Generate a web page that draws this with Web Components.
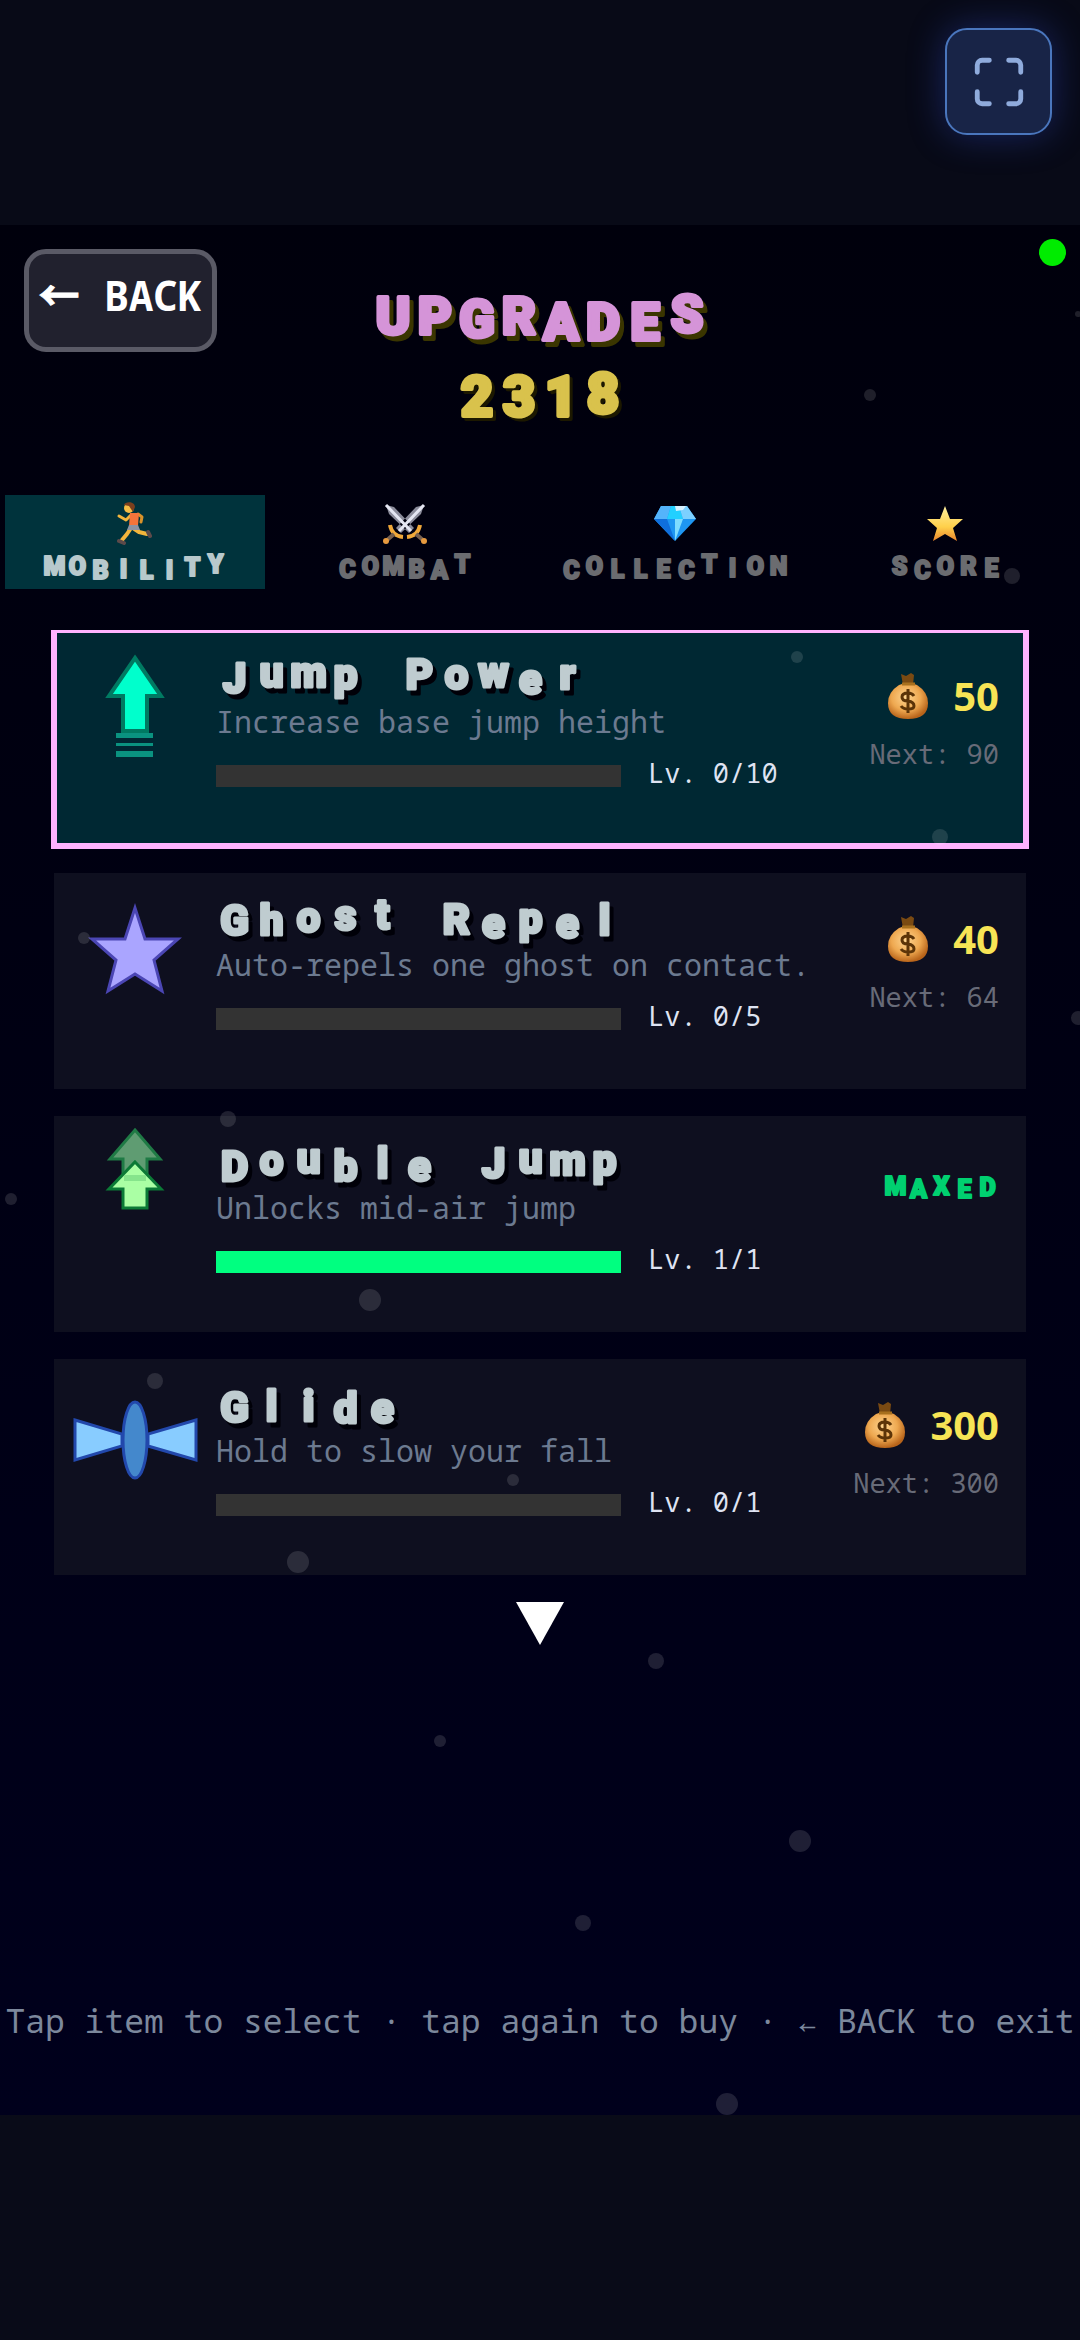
<!DOCTYPE html>
<html lang="en">
<head>
<meta charset="utf-8">
<meta name="viewport" content="width=device-width, initial-scale=1">
<title>Upgrades</title>
<style>
body { margin: 0; background: #080a17; color: #fff; font-family: "Noto Sans Mono", "DejaVu Sans Mono", monospace; }
</style>
</head>
<body>
<game-shell>
  <upgrade-screen>
    <screen-header slot="header" heading="UPGRADES" coins="2318"></screen-header>
    <tab-bar slot="tabs">
      <tab-item label="MOBILITY" bob="0 0 4 3 4 4 1 -2" active>
        <svg viewBox="0 0 38 44" width="38" height="44" aria-hidden="true" fill="none" stroke-linecap="round" stroke-linejoin="round">
          <path d="M22 13L26 16L25 21" stroke="#d9922a" stroke-width="3"/>
          <path d="M15 14L10 19L3 15" stroke="#f2b53c" stroke-width="3"/>
          <path d="M17 27L23 31L31 33M15 27L11 33L6 39" stroke="#f2b53c" stroke-width="4"/>
          <path d="M32 31L34 35M3 40L8 42" stroke="#5c4a4a" stroke-width="4"/>
          <path d="M14 12H23L22 25H13Z" fill="#f4743b"/>
          <path d="M13 24H22L24 29H11Z" fill="#8d93a3"/>
          <circle cx="13" cy="7" r="5" fill="#f5bd45"/>
          <path d="M8 4C9 0 19 0 19 6L17 11L13 5Z" fill="#7b3f1d"/>
        </svg>
      </tab-item>
      <tab-item label="COMBAT" bob="3 0 0 3 4 -2">
        <svg viewBox="0 0 44 42" width="44" height="42" aria-hidden="true">
          <path d="M3 3L11 5L31 26L26 31L6 12ZM41 3L33 5L13 26L18 31L38 12Z" fill="#8b8c9b"/>
          <path d="M3 3L28 29M41 3L16 29" stroke="#e4e6f2" stroke-width="3"/>
          <path d="M7 23Q9 34 20 35M37 23Q35 34 24 35" fill="none" stroke="#f0a83a" stroke-width="4"/>
          <path d="M11 32L3 39M33 32L41 39" stroke="#77604f" stroke-width="4"/>
          <circle cx="3" cy="39" r="3" fill="#e79a3f"/><circle cx="41" cy="39" r="3" fill="#e79a3f"/>
        </svg>
      </tab-item>
      <tab-item label="COLLECTION" bob="4 0 3 3 3 4 -2 2 0 0">
        <svg viewBox="0 0 44 38" width="44" height="38" aria-hidden="true">
          <path d="M8 2H34L43 15L22 37L1 15Z" fill="#1e96f2"/>
          <path d="M8 2H18L14 15H1Z" fill="#54b4fb"/><path d="M18 2H26L30 15H14Z" fill="#22d0ff"/>
          <path d="M26 2H34L43 15H30Z" fill="#7cd0ff"/><path d="M1 15H14L22 37Z" fill="#0f6fdc"/>
          <path d="M22 15H30L22 37Z" fill="#7fdcff"/><path d="M22 2H33L30 6L23 7Z" fill="#d8f2ff"/>
        </svg>
      </tab-item>
      <tab-item label="SCORE" bob="0 4 0 0 2">
        <svg viewBox="0 0 38 37" width="38" height="37" aria-hidden="true">
          <defs><linearGradient id="g" x1="0" y1="0" x2="0" y2="1"><stop offset="0" stop-color="#fff0a0"/><stop offset=".6" stop-color="#ffd04a"/><stop offset="1" stop-color="#e8842c"/></linearGradient></defs>
          <path d="M19 1L24 14H37L27 23L31 36L19 29L7 36L11 23L1 14H14Z" fill="url(#g)"/>
        </svg>
      </tab-item>
    </tab-bar>
    <upgrade-card name="Jump Power" bob="3 -3 -3 -1 0 -1 -1 -3 4 -1" desc="Increase base jump height" level="0" max="10" price="50" next="90" selected>
      <svg slot="icon" viewBox="0 0 162 150" width="162" height="150" aria-hidden="true">
        <path d="M81 28L107 66H93V101H69V66H55Z" fill="#00ffcc" stroke="#007a62" stroke-width="4"/>
        <path d="M62 103H99V108H62ZM62 113H99V116H62ZM62 121H99V127H62Z" fill="#0a9380"/>
      </svg>
    </upgrade-card>
    <upgrade-card name="Ghost Repel" bob="2 2 -1 -3 -4 0 1 5 0 5 2" desc="Auto-repels one ghost on contact." level="0" max="5" price="40" next="64">
      <svg slot="icon" viewBox="0 0 162 150" width="162" height="150" aria-hidden="true">
        <path d="M81 35L91 66H124L100 87L108 118L81 101L54 118L62 87L38 66H71Z" fill="#aaa5ff" stroke="#4b46b4" stroke-width="3"/>
      </svg>
    </upgrade-card>
    <upgrade-card name="Double Jump" bob="5 -1 -3 5 2 5 0 2 -3 -1 -1" desc="Unlocks mid-air jump" level="1" max="1">
      <svg slot="icon" viewBox="0 0 162 150" width="162" height="150" aria-hidden="true">
        <path d="M81 14L106 43H93V65H69V43H56Z" fill="#5f9c72" stroke="#1f7a45" stroke-width="3"/>
        <path d="M81 46L107 73H93V92H69V73H55Z" fill="#aaffa4" stroke="#0b7a36" stroke-width="3"/>
        <path d="M70 59H92V65H70Z" fill="#86e48c"/>
      </svg>
    </upgrade-card>
    <upgrade-card name="Glide" bob="3 2 2 4 4" desc="Hold to slow your fall" level="0" max="1" price="300" next="300">
      <svg slot="icon" viewBox="0 0 162 150" width="162" height="150" aria-hidden="true">
        <g fill="#88ccff" stroke="#2248ac" stroke-width="3">
          <path d="M21 61L68 75V87L21 101Z"/>
          <path d="M142 61L94 75V87L142 101Z"/>
          <ellipse cx="81" cy="81" rx="12" ry="38" fill="#4488cc"/>
        </g>
      </svg>
    </upgrade-card>
    <span slot="hint">Tap item to select · tap again to buy · ← BACK to exit</span>
  </upgrade-screen>
</game-shell>

<script>
const define = (tag, render, css) => customElements.define(tag, class extends HTMLElement {
  connectedCallback() {
    if (this.shadowRoot) return;
    this.attachShadow({ mode: 'open' }).innerHTML = `<style>${css}</style>${render(this)}`;
  }
});
const attr = (el, n) => el.getAttribute(n);

/* Arcade lettering: every glyph is centred in its own cell and bobs up or down. */
define('bob-text', el => {
  const text = attr(el, 'text'), cell = +attr(el, 'cell'), size = +attr(el, 'size');
  const bob = (attr(el, 'bob') || '').split(' ').map(Number);
  const xs = [...text].map((_, i) => (i + 0.5) * cell).join(' ');
  const ys = [...text].map((_, i) => size - 2 + (bob[i] || 0)).join(' ');
  return `<svg width="${text.length * cell}" height="${size + 12}"><text x="${xs}" y="${ys}" font-size="${size}">${text}</text></svg>`;
}, `
:host { display: block; }
svg { display: block; overflow: visible; filter: var(--bob-shadow, none); }
text { font-family: Roboto, sans-serif; font-weight: 900; text-anchor: middle; fill: currentColor;
  stroke: currentColor; stroke-width: var(--bob-weight, 2px); stroke-linejoin: round; }
`);

define('game-shell', () => `
<header><button aria-label="Fullscreen">
  <svg viewBox="0 0 24 24" width="58" height="58" fill="none" stroke="currentColor" stroke-width="2" stroke-linecap="round" stroke-linejoin="round">
    <path d="M8 3H5a2 2 0 0 0-2 2v3M16 3h3a2 2 0 0 1 2 2v3M8 21H5a2 2 0 0 1-2-2v-3M16 21h3a2 2 0 0 0 2-2v-3"/>
  </svg></button></header>
<slot></slot>
<footer></footer>`, `
:host { display: flex; flex-direction: column; min-height: 100vh; }
header, footer { flex: 0 0 225px; box-sizing: border-box; }
header { display: flex; justify-content: flex-end; align-items: flex-start; padding: 28px; }
footer { background: #090b18; }
button { width: 107px; height: 107px; padding: 0; display: grid; place-items: center; color: #8fabdc;
  background: #182447; border: 2px solid #4a76bd; border-radius: 22px; box-shadow: 0 0 36px rgba(50, 80, 210, .4); }
`);

define('star-field', () => `<svg aria-hidden="true">${[
  [870,170,6],[1078,89,3],[1012,351,8],[797,432,6],[940,612,8],[84,713,6],[1078,793,7],[228,894,8],[11,974,6],
  [370,1075,11],[155,1156,8],[513,1255,6],[298,1337,11],[656,1436,8],[440,1516,6],[800,1616,11],[583,1698,8],[727,1879,11]
].map(([x, y, r]) => `<circle cx="${x}" cy="${y}" r="${r}"/>`).join('')}</svg>`, `
:host { position: absolute; inset: 0; overflow: hidden; pointer-events: none; }
svg { width: 100%; height: 100%; display: block; }
circle { fill: rgba(255, 255, 255, .12); }
`);

define('upgrade-screen', () => `
<slot name="header"></slot>
<slot name="tabs"></slot>
<section class="list"><slot></slot></section>
<button aria-label="More upgrades"><svg width="48" height="43" viewBox="0 0 48 43"><path d="M0 0H48L24 43Z" fill="#fff"/></svg></button>
<p><slot name="hint"></slot></p>
<star-field></star-field>`, `
:host { display: flex; flex-direction: column; flex: 1; position: relative; background: linear-gradient(#00000c, #00001c); }
.list { display: flex; flex-direction: column; gap: 27px; margin: 41px 5% 27px; clip-path: inset(0 -3px); }
button { align-self: center; padding: 0; border: 0; background: none; line-height: 0; }
p { margin: auto 0 71px; text-align: center; white-space: nowrap; color: #7c889c; font-size: 33px; line-height: 46px; }
`);

define('screen-header', el => `
<button><span>←</span> BACK</button>
<div class="mid">
  <h1><bob-text text="${attr(el, 'heading')}" cell="42" size="52" bob="0 0 3 0 6 6 6 -2"></bob-text></h1>
  <div class="coins"><bob-text text="${attr(el, 'coins')}" cell="42" size="56" bob="0 0 0 -3"></bob-text></div>
</div>
<i></i>`, `
:host { display: grid; grid-template-columns: 1fr auto 1fr; align-items: start; padding: 14px 14px 65px; --bob-weight: 4px; }
button { justify-self: start; box-sizing: border-box; width: 193px; height: 103px; margin: 10px; padding: 0 0 12px;
  color: #fff; background: #21212e; border: 5px solid #5a5a66; border-radius: 22px;
  font: bold 41px "Noto Sans Mono", "DejaVu Sans Mono", monospace; white-space: nowrap; }
button span { font-family: "Noto Sans CJK SC", sans-serif; line-height: 1; -webkit-text-stroke: 1px #fff; }
.mid { display: flex; flex-direction: column; align-items: center; gap: 14px; margin-top: 45px; }
h1 { margin: 0; color: #d594d8; --bob-shadow: drop-shadow(4px 5px 0 #3a3500); }
.coins { color: #d9c24c; --bob-shadow: drop-shadow(3px 3px 0 #1c1800); }
i { justify-self: end; width: 27px; height: 27px; border-radius: 50%; background: #00ec00; }
`);

define('tab-bar', () => `<nav><slot></slot></nav>`, `
:host { display: block; }
nav { display: grid; grid-template-columns: repeat(4, 1fr); }
`);

define('tab-item', el => `<button><span><slot></slot></span>
<bob-text text="${attr(el, 'label')}" cell="23" size="25" bob="${attr(el, 'bob')}"></bob-text></button>`, `
:host { display: block; padding: 0 5px; }
button { width: 100%; height: 94px; padding: 7px 0 0; border: 0; background: none; color: #6b6c70;
  display: flex; flex-direction: column; align-items: center; gap: 8px; font: inherit; }
span { height: 42px; display: flex; align-items: center; }
:host([active]) button { background: #00333c; color: #b8c9cc; }
`);

define('money-bag', () => `<svg viewBox="0 0 42 48" width="42" height="48" aria-hidden="true">
  <defs><radialGradient id="b" cx=".45" cy=".4" r=".6"><stop offset="0" stop-color="#ffd590"/><stop offset=".6" stop-color="#eea850"/><stop offset="1" stop-color="#b8641a"/></radialGradient></defs>
  <path d="M14 2L19 4L24 1L27 3L26 13H16Z" fill="#7a4a12"/>
  <path d="M12 13Q21 9 30 13Q41 20 41 31Q41 47 21 47Q1 47 1 31Q1 20 12 13Z" fill="url(#b)"/>
  <path d="M15 12H28" stroke="#a8701e" stroke-width="3"/>
  <path d="M27 24Q25 21 21 21Q15 21 15 25Q15 29 21 29Q27 30 27 34Q27 37 21 37Q16 37 14 34M21 17V41" fill="none" stroke="#5c3408" stroke-width="3"/>
</svg>`, `
:host { display: block; }
svg { display: block; }
`);

define('upgrade-card', el => `<button>
<slot name="icon"></slot>
<span class="body">
  <bob-text class="name" text="${attr(el, 'name')}" cell="37" size="42" bob="${attr(el, 'bob')}"></bob-text>
  <span class="desc">${attr(el, 'desc')}</span>
  <span class="level"><progress id="p" value="${attr(el, 'level')}" max="${attr(el, 'max')}"></progress><label for="p">Lv. ${attr(el, 'level')}/${attr(el, 'max')}</label></span>
</span>
<span class="cost">${attr(el, 'price')
  ? `<span class="price"><money-bag></money-bag>${attr(el, 'price')}</span><span class="next">Next: ${attr(el, 'next')}</span>`
  : `<bob-text class="maxed" text="MAXED" cell="23" size="25" bob="0 3 0 3 1"></bob-text>`}</span>
</button>`, `
:host { display: block; }
button { display: grid; grid-template-columns: 162px 1fr auto; align-items: start; width: 100%; height: 216px; padding: 0 27px 0 0;
  border: 0; background: #0e0f1f; color: #fff; font: inherit; text-align: left; }
:host([selected]) button { background: #002833; outline: 6px solid #ffb3ff; outline-offset: -3px; }
.body { display: flex; flex-direction: column; padding-top: 20px; white-space: nowrap; }
.name { color: #bfccd0; --bob-weight: 3px; --bob-shadow: drop-shadow(4px 5px 0 #000008); }
.desc { color: #6c7a90; font-size: 30px; line-height: 36px; }
.level { display: flex; align-items: flex-start; gap: 27px; margin-top: 25px; font-size: 27px; line-height: 16px; color: #dfe3f2; }
progress { appearance: none; flex: 0 0 405px; height: 22px; border: 0; background: #333; }
progress::-webkit-progress-bar { background: #333; }
progress::-webkit-progress-value { background: #00ff80; }
.cost { display: flex; flex-direction: column; align-items: flex-end; gap: 16px; padding-top: 42px; white-space: nowrap; }
.price { display: flex; align-items: center; gap: 24px; color: #f7e455; height: 48px;
  font: bold 40px/48px "Open Sans", sans-serif; }
.next { color: #686b78; font-size: 27px; line-height: 36px; }
.maxed { color: #00d070; margin-top: 14px; }
`);
</script>
</body>
</html>
